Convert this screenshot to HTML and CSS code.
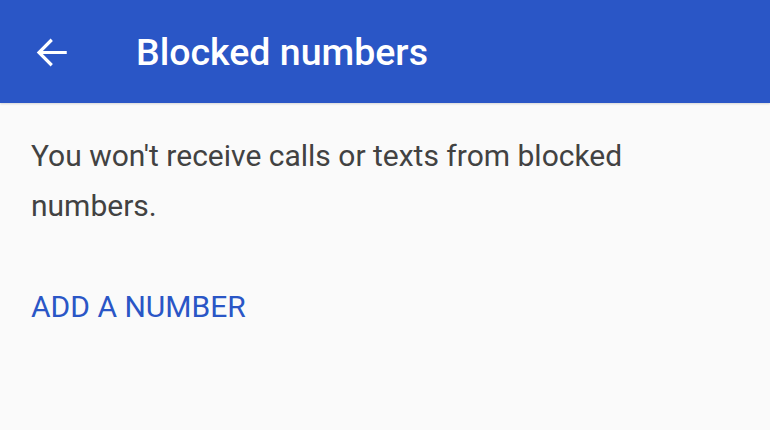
FILE: index.html
```html
<!DOCTYPE html>
<html>
<head>
<meta charset="utf-8">
<link rel="stylesheet" href="styles.css">
</head>
<body>
<header class="appbar">
  <svg class="back" viewBox="0 0 24 24" width="45" height="45"><path d="M19.6 12H5.2M11.6 5.2L4.8 12l6.8 6.8" fill="none" stroke="#fff" stroke-width="1.7"/></svg>
  <h1 class="title">Blocked numbers</h1>
</header>
<main class="content">
  <p class="desc">You won't receive calls or texts from blocked numbers.</p>
  <div class="action">ADD A NUMBER</div>
</main>
</body>
</html>
```
FILE: styles.css
```css
html, body {
  margin: 0;
  padding: 0;
  background: #fafafa;
  font-family: Roboto, "Noto Sans", sans-serif;
  width: 770px;
  height: 430px;
  overflow: hidden;
}
.appbar {
  height: 103px;
  background: #2a56c6;
  display: flex;
  align-items: center;
  padding-left: 30px;
  box-shadow: 0 1px 2px rgba(0,0,0,0.15);
}
.back {
  display: block;
  margin-top: 1px;
}
.title {
  margin: 1px 0 0 61px;
  color: #fff;
  font-size: 37.5px;
  line-height: 44px;
  font-weight: 500;
}
.content {
  padding: 0 31px;
}
.desc {
  margin: 28px 0 0;
  font-size: 30px;
  line-height: 50px;
  color: #424242;
  max-width: 620px;
}
.action {
  margin-top: 51px;
  font-size: 30px;
  color: #2a56c6;
  line-height: 50px;
}
```
